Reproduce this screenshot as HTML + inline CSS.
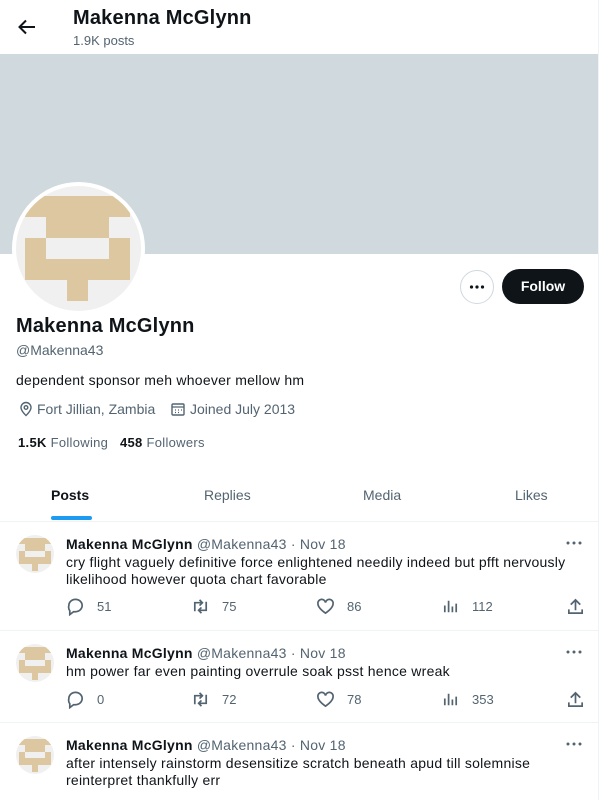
<!DOCTYPE html>
<html><head><meta charset="utf-8"><style>
*{box-sizing:border-box;margin:0;padding:0}
body{width:600px;height:800px;overflow:hidden;background:#fff;font-family:"Liberation Sans",Arial,sans-serif;color:#0f1419;position:relative}
.abs{position:absolute}
.gray{color:#536471}
.vline{position:absolute;left:598px;top:0;width:1px;height:800px;background:#eff3f4}
.post{position:absolute;left:0;width:598px;border-top:1px solid #eff3f4}
.pav{position:absolute;left:16px;width:38px;height:38px;border-radius:50%;overflow:hidden;background:#f0f0f0}
.pav i{position:absolute;background:#dcc7a0}
.act{position:absolute;font-size:13px;color:#536471;display:flex;align-items:center}
.act svg{width:19px;height:19px;fill:none;stroke:#536471;stroke-width:1.8;margin-right:12px}
.t{letter-spacing:0.25px}
</style></head><body>
<div class="vline"></div>
<svg class="abs" style="left:17px;top:17px" width="20" height="20" viewBox="0 0 20 20"><path d="M18 10H3M9 3.5L2.5 10 9 16.5" stroke="#0f1419" stroke-width="2" fill="none"/></svg>
<div class="abs" style="left:73px;top:7px;font-size:20px;font-weight:bold;letter-spacing:0.2px">Makenna McGlynn</div>
<div class="abs gray" style="left:73px;top:33px;font-size:13px">1.9K posts</div>
<div class="abs" style="left:0;top:54px;width:598px;height:200px;background:#cfd9de"></div>
<div class="abs" style="left:12px;top:182px;width:133px;height:133px;border-radius:50%;background:#fff;padding:4px">
 <div style="position:relative;width:125px;height:125px;border-radius:50%;overflow:hidden;background:#f0f0f0">
  <i style="position:absolute;left:9px;top:10px;width:105px;height:21px;background:#dcc7a0"></i>
  <i style="position:absolute;left:30px;top:31px;width:63px;height:21px;background:#dcc7a0"></i>
  <i style="position:absolute;left:9px;top:52px;width:21px;height:21px;background:#dcc7a0"></i>
  <i style="position:absolute;left:93px;top:52px;width:21px;height:21px;background:#dcc7a0"></i>
  <i style="position:absolute;left:9px;top:73px;width:105px;height:21px;background:#dcc7a0"></i>
  <i style="position:absolute;left:51px;top:94px;width:21px;height:21px;background:#dcc7a0"></i>
 </div>
</div>
<div class="abs" style="left:460px;top:270px;width:34px;height:34px;border:1px solid #cfd9de;border-radius:50%"><svg width="32" height="32" viewBox="0 0 32 32"><circle cx="10.5" cy="16" r="1.6" fill="#0f1419"/><circle cx="16" cy="16" r="1.6" fill="#0f1419"/><circle cx="21.5" cy="16" r="1.6" fill="#0f1419"/></svg></div>
<div class="abs" style="left:502px;top:269px;width:82px;height:35px;border-radius:18px;background:#0f1419;color:#fff;font-weight:bold;font-size:14px;text-align:center;line-height:35px">Follow</div>
<div class="abs" style="left:16px;top:315px;font-size:20px;font-weight:bold;letter-spacing:0.2px">Makenna McGlynn</div>
<div class="abs gray" style="left:16px;top:342px;font-size:14px">@Makenna43</div>
<div class="abs t" style="left:16px;top:372px;font-size:14px">dependent sponsor meh whoever mellow hm</div>
<svg class="abs" style="left:18px;top:401px" width="16" height="16" viewBox="0 0 16 16"><path d="M8 14.5s-5-4.5-5-8a5 5 0 0110 0c0 3.5-5 8-5 8z" stroke="#536471" stroke-width="1.4" fill="none"/><circle cx="8" cy="6.5" r="1.8" stroke="#536471" stroke-width="1.4" fill="none"/></svg>
<div class="abs gray" style="left:37px;top:401px;font-size:14px">Fort Jillian, Zambia</div>
<svg class="abs" style="left:170px;top:401px" width="16" height="16" viewBox="0 0 16 16"><rect x="2" y="3" width="12" height="11" rx="1" stroke="#536471" stroke-width="1.4" fill="none"/><path d="M2 6h12M5 9h1M8 9h1M11 9h1M5 11.5h1M8 11.5h1" stroke="#536471" stroke-width="1.3"/></svg>
<div class="abs gray" style="left:190px;top:401px;font-size:14px">Joined July 2013</div>
<div class="abs" style="left:18px;top:435px;font-size:13px;letter-spacing:0.3px"><b>1.5K</b> <span class="gray">Following</span>&nbsp;&nbsp; <b>458</b> <span class="gray">Followers</span></div>
<div class="abs" style="left:51px;top:487px;font-size:14px;font-weight:bold">Posts</div>
<div class="abs" style="left:51px;top:516px;width:41px;height:4px;border-radius:2px;background:#1d9bf0"></div>
<div class="abs gray" style="left:204px;top:487px;font-size:14px">Replies</div>
<div class="abs gray" style="left:363px;top:487px;font-size:14px">Media</div>
<div class="abs gray" style="left:515px;top:487px;font-size:14px">Likes</div>

<div class="post" style="top:521px;height:110px"></div>
<div class="post" style="top:630px;height:93px"></div>
<div class="post" style="top:722px;height:80px"></div>

<!-- post 1 -->
<div class="pav" style="top:535px"><i style="left:3px;top:3px;width:32px;height:6px"></i><i style="left:9px;top:9px;width:20px;height:7px"></i><i style="left:3px;top:16px;width:6px;height:6px"></i><i style="left:29px;top:16px;width:6px;height:6px"></i><i style="left:3px;top:22px;width:32px;height:7px"></i><i style="left:16px;top:29px;width:6px;height:7px"></i></div>
<div class="abs t" style="left:66px;top:536px;font-size:14px"><b>Makenna McGlynn</b> <span class="gray">@Makenna43 · Nov 18</span></div>
<svg class="abs" style="left:564px;top:536px" width="20" height="14" viewBox="0 0 20 14"><circle cx="4" cy="7" r="1.5" fill="#536471"/><circle cx="10" cy="7" r="1.5" fill="#536471"/><circle cx="16" cy="7" r="1.5" fill="#536471"/></svg>
<div class="abs t" style="left:66px;top:554px;font-size:14px;line-height:17px;width:520px">cry flight vaguely definitive force enlightened needily indeed but pfft nervously likelihood however quota chart favorable</div>
<div class="act" style="left:66px;top:597px"><svg viewBox="0 0 20 20"><path d="M3 9a7 6.5 0 117 6.5H8l-4 3v-4A6.5 6.5 0 013 9z"/></svg>51</div>
<div class="act" style="left:191px;top:597px"><svg viewBox="0 0 20 20"><path d="M4 15V6h8M9 3l3 3-3 3M16 5v9H8M11 17l-3-3 3-3"/></svg>75</div>
<div class="act" style="left:316px;top:597px"><svg viewBox="0 0 20 20"><path d="M10 17S2 12 2 7a4 4 0 018-1 4 4 0 018 1c0 5-8 10-8 10z"/></svg>86</div>
<div class="act" style="left:441px;top:597px"><svg viewBox="0 0 20 20"><path d="M4 16V9M8 16V4M12 16V10M16 16V7"/></svg>112</div>
<div class="act" style="left:566px;top:597px"><svg viewBox="0 0 20 20"><path d="M10 3v11M5 8l5-5 5 5M3 13v4h14v-4"/></svg></div>
<!-- post 2 -->
<div class="pav" style="top:644px"><i style="left:3px;top:3px;width:32px;height:6px"></i><i style="left:9px;top:9px;width:20px;height:7px"></i><i style="left:3px;top:16px;width:6px;height:6px"></i><i style="left:29px;top:16px;width:6px;height:6px"></i><i style="left:3px;top:22px;width:32px;height:7px"></i><i style="left:16px;top:29px;width:6px;height:7px"></i></div>
<div class="abs t" style="left:66px;top:645px;font-size:14px"><b>Makenna McGlynn</b> <span class="gray">@Makenna43 · Nov 18</span></div>
<svg class="abs" style="left:564px;top:645px" width="20" height="14" viewBox="0 0 20 14"><circle cx="4" cy="7" r="1.5" fill="#536471"/><circle cx="10" cy="7" r="1.5" fill="#536471"/><circle cx="16" cy="7" r="1.5" fill="#536471"/></svg>
<div class="abs t" style="left:66px;top:663px;font-size:14px;line-height:17px">hm power far even painting overrule soak psst hence wreak</div>
<div class="act" style="left:66px;top:690px"><svg viewBox="0 0 20 20"><path d="M3 9a7 6.5 0 117 6.5H8l-4 3v-4A6.5 6.5 0 013 9z"/></svg>0</div>
<div class="act" style="left:191px;top:690px"><svg viewBox="0 0 20 20"><path d="M4 15V6h8M9 3l3 3-3 3M16 5v9H8M11 17l-3-3 3-3"/></svg>72</div>
<div class="act" style="left:316px;top:690px"><svg viewBox="0 0 20 20"><path d="M10 17S2 12 2 7a4 4 0 018-1 4 4 0 018 1c0 5-8 10-8 10z"/></svg>78</div>
<div class="act" style="left:441px;top:690px"><svg viewBox="0 0 20 20"><path d="M4 16V9M8 16V4M12 16V10M16 16V7"/></svg>353</div>
<div class="act" style="left:566px;top:690px"><svg viewBox="0 0 20 20"><path d="M10 3v11M5 8l5-5 5 5M3 13v4h14v-4"/></svg></div>
<!-- post 3 -->
<div class="pav" style="top:736px"><i style="left:3px;top:3px;width:32px;height:6px"></i><i style="left:9px;top:9px;width:20px;height:7px"></i><i style="left:3px;top:16px;width:6px;height:6px"></i><i style="left:29px;top:16px;width:6px;height:6px"></i><i style="left:3px;top:22px;width:32px;height:7px"></i><i style="left:16px;top:29px;width:6px;height:7px"></i></div>
<div class="abs t" style="left:66px;top:737px;font-size:14px"><b>Makenna McGlynn</b> <span class="gray">@Makenna43 · Nov 18</span></div>
<svg class="abs" style="left:564px;top:737px" width="20" height="14" viewBox="0 0 20 14"><circle cx="4" cy="7" r="1.5" fill="#536471"/><circle cx="10" cy="7" r="1.5" fill="#536471"/><circle cx="16" cy="7" r="1.5" fill="#536471"/></svg>
<div class="abs t" style="left:66px;top:755px;font-size:14px;line-height:17px">after intensely rainstorm desensitize scratch beneath apud till solemnise<br>reinterpret thankfully err</div>
</body></html>
